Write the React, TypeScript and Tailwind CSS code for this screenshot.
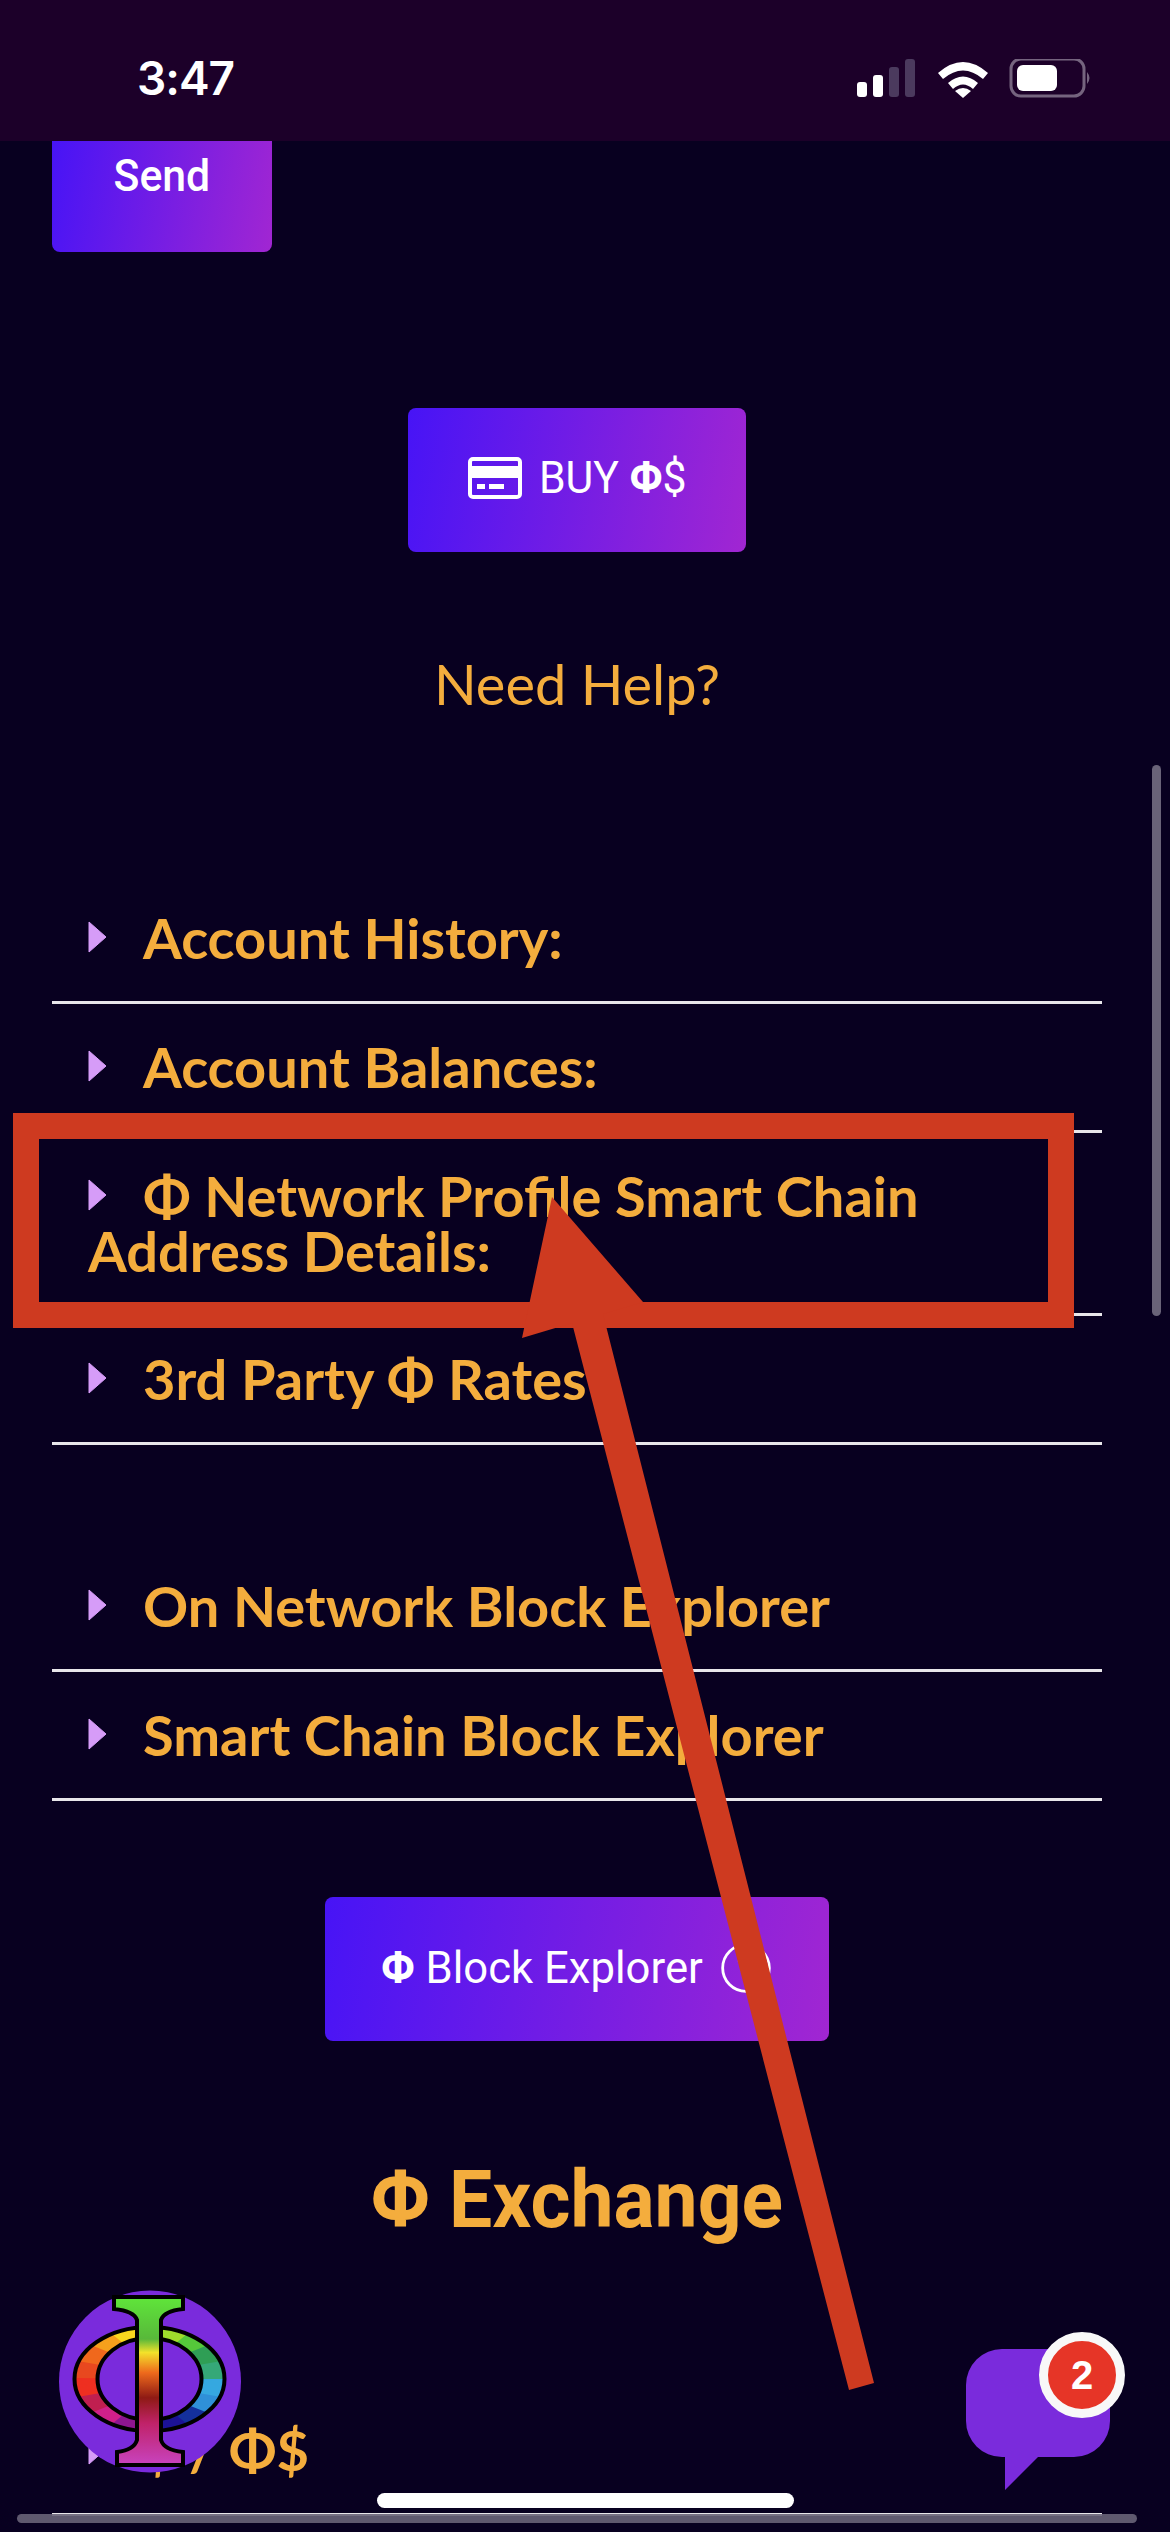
import { CircleHelp } from 'lucide-react';

const BUTTON_FONT = "font-['Roboto',sans-serif]";
const BUTTON_BG = 'bg-[linear-gradient(100deg,#4714f6,#a126d2)]';

function StatusIcons() {
  return (
    <svg width="240" height="42" viewBox="0 0 240 42" className="block">
      {/* signal */}
      <rect x="0" y="23" width="10" height="15" rx="3" fill="#fff" />
      <rect x="16" y="16" width="10" height="22" rx="3" fill="#fff" />
      <rect x="32" y="8" width="10" height="30" rx="3" fill="#4b3a5e" />
      <rect x="48" y="0" width="10" height="38" rx="3" fill="#4b3a5e" />
      {/* wifi */}
      <path d="M81 14 Q106 -8 131 14 L126 20 Q106 3 86 20 Z" fill="#fff" />
      <path d="M91 24 Q106 11 121 24 L116 30 Q106 21 96 30 Z" fill="#fff" />
      <path d="M98 32 Q106 26 114 32 L106 39 Z" fill="#fff" />
      {/* battery */}
      <rect x="154" y="0" width="73" height="37" rx="10" fill="none" stroke="#75647f" strokeWidth="3" />
      <rect x="160" y="6" width="40" height="26" rx="6" fill="#fff" />
      <path d="M230 13 Q235 19 230 25 Z" fill="#75647f" />
    </svg>
  );
}

function CardIcon() {
  return (
    <svg width="54" height="42" viewBox="0 0 54 42" className="shrink-0">
      <rect x="2" y="2" width="50" height="38" rx="3" fill="none" stroke="#fff" strokeWidth="4" />
      <rect x="2" y="9" width="50" height="12" fill="#fff" />
      <rect x="9" y="27" width="8" height="5" fill="#fff" />
      <rect x="21" y="27" width="15" height="5" fill="#fff" />
    </svg>
  );
}

function Row({ children, tall }: { children: React.ReactNode; tall?: boolean }) {
  return (
    <div className={`border-b-[3px] border-[#e8e6ea] pl-[36px] pr-[60px] pt-[35px] ${tall ? 'h-[183px]' : 'h-[129px]'}`}>
      <div className="font-['Lato',sans-serif] text-[56px] leading-[55px] font-bold text-[#f4ad3d]">
        <svg width="18" height="32" viewBox="0 0 18 32" className="inline-block mr-[37px] align-[6px]">
          <path d="M1 1 L18 16 L1 31 Z" fill="#d69cf8" stroke="#d69cf8" strokeWidth="1" strokeLinejoin="round" />
        </svg>
        {children}
      </div>
    </div>
  );
}

// segments of the rainbow ring, clockwise from the left
const RING_COLORS = [
  '#e8481f', '#f0681c', '#f5a01c', '#f9d81e', '#e8ea2a', '#9fdc2c', '#55c83a', '#2f9e55',
  '#35a878', '#35a8e0', '#2f90d8', '#14309c', '#1c1296', '#5a1496', '#8d1690', '#d0208a', '#c01f50', '#ee2f20',
];

function ringSegment(index: number) {
  const cx = 90.5;
  const cy = 89;
  const step = (Math.PI * 2) / RING_COLORS.length;
  const a = Math.PI + index * step;
  const b = a + step + 0.02;
  const pt = (rx: number, ry: number, t: number) =>
    `${(cx + rx * Math.cos(t)).toFixed(1)} ${(cy + ry * Math.sin(t)).toFixed(1)}`;
  return `M${pt(75, 52, a)} A75 52 0 0 1 ${pt(75, 52, b)} L${pt(52, 41, b)} A52 41 0 0 0 ${pt(52, 41, a)} Z`;
}

function PhiLogo() {
  return (
    <svg width="182" height="183" viewBox="0 0 182 183" className="absolute left-[59px] top-[2290px]">
      <defs>
        <linearGradient id="stem" x1="0" y1="0" x2="0" y2="1">
          <stop offset="0" stopColor="#5fe63a" />
          <stop offset="0.25" stopColor="#58b83a" />
          <stop offset="0.33" stopColor="#f3e22a" />
          <stop offset="0.45" stopColor="#ee6a1c" />
          <stop offset="0.6" stopColor="#8e1a14" />
          <stop offset="0.75" stopColor="#c02268" />
          <stop offset="1" stopColor="#c844c0" />
        </linearGradient>
      </defs>
      <circle cx="91" cy="91.5" r="91" fill="#7a2bdc" />
      {RING_COLORS.map((color, i) => (
        <path key={color + i} d={ringSegment(i)} fill={color} />
      ))}
      <ellipse cx="90.5" cy="89" rx="75" ry="52" fill="none" stroke="#000" strokeWidth="4" />
      <ellipse cx="90.5" cy="89" rx="52" ry="41" fill="none" stroke="#000" strokeWidth="4" />
      <path
        d="M55 7 H124 V19 Q105 21 102 30 V150 Q105 160 124 162 V175 H58 V162 Q75 160 78 150 V30 Q75 21 55 19 Z"
        fill="url(#stem)"
        stroke="#000"
        strokeWidth="4"
      />
    </svg>
  );
}

function ChatBubble() {
  return (
    <div className="absolute left-[966px] top-[2332px] w-[160px] h-[160px]">
      <svg width="144" height="141" viewBox="0 0 144 141" className="absolute left-0 top-[17px]">
        <path
          d="M36 0 H108 A36 36 0 0 1 144 36 V72 A36 36 0 0 1 108 108 H72 L39 141 V108 H36 A36 36 0 0 1 0 72 V36 A36 36 0 0 1 36 0 Z"
          fill="#7a2bdc"
        />
      </svg>
      <div className="absolute left-[73px] top-0 flex h-[86px] w-[86px] items-center justify-center rounded-full border-[9px] border-[#f8f8f8] bg-[#e63527] font-['Liberation_Sans',sans-serif] text-[40px] leading-none font-bold text-white">
        2
      </div>
    </div>
  );
}

export default function App() {
  return (
    <div className="relative flex h-[2532px] w-[1170px] flex-col overflow-hidden bg-[#080020]">
      {/* Status bar */}
      <div className="flex h-[141px] shrink-0 items-start justify-between bg-[#1c0029] pl-[137px] pr-[73px] pt-[48px]">
        <span className="font-['Inter',sans-serif] text-[46px] leading-[60px] font-semibold tracking-[-1px] text-white">3:47</span>
        <div className="pt-[11px]">
          <StatusIcons />
        </div>
      </div>

      <div className="flex flex-col pl-[52px] pr-[68px]">
        <div
          className={`flex h-[111px] w-[220px] justify-center rounded-b-lg pt-[10px] text-[45px] leading-[50px] font-medium text-white ${BUTTON_FONT} ${BUTTON_BG}`}
        >
          <span className="inline-block scale-x-[0.95]">Send</span>
        </div>

        <div
          className={`mx-auto mt-[156px] flex h-[144px] w-[338px] items-center justify-center gap-[17px] rounded-lg pb-[5px] text-[45px] leading-none text-white ${BUTTON_FONT} ${BUTTON_BG}`}
        >
          <CardIcon />
          <span className="-mx-[4px] inline-block scale-x-[0.95]">
            BUY <span className="font-bold">Φ</span>$
          </span>
        </div>

        <div className="mt-[102px] text-center font-['Lato',sans-serif] text-[56px] leading-[60px] text-[#f4ad3d]">Need Help?</div>

        <div className="mt-[161px]">
          <Row>Account History:</Row>
          <Row>Account Balances:</Row>
          <Row tall>Φ Network Profile Smart Chain Address Details:</Row>
          <Row>3rd Party Φ Rates</Row>
        </div>

        <div className="mt-[98px]">
          <Row>On Network Block Explorer</Row>
          <Row>Smart Chain Block Explorer</Row>
        </div>

        <div
          className={`mx-auto mt-[96px] flex h-[144px] w-[504px] items-center justify-center gap-[14px] rounded-lg pb-[3px] text-[45px] leading-none text-white ${BUTTON_FONT} ${BUTTON_BG}`}
        >
          <span className="-mx-[4px] inline-block scale-x-[0.97]">
            <span className="font-bold">Φ</span> Block Explorer
          </span>
          <CircleHelp size={56} strokeWidth={1.2} />
        </div>

        <div className={`mt-[119px] flex justify-center text-[80px] leading-[80px] font-bold text-[#f4ad3d] ${BUTTON_FONT}`}>
          <span className="inline-block scale-x-[0.96]">Φ Exchange</span>
        </div>

        <div className="mt-[147px]">
          <Row>$ / Φ$</Row>
        </div>
      </div>

      {/* Annotation drawn over the screenshot */}
      <div className="absolute left-[13px] top-[1113px] h-[215px] w-[1061px] border-[26px] border-[#ce3a20]" />
      <svg width="1170" height="2532" viewBox="0 0 1170 2532" className="absolute left-0 top-0">
        <path d="M552 1197 L643 1302 L603 1314 L874 2383 L849 2390 L572 1323 L522 1338 Z" fill="#ce3a20" />
      </svg>

      <PhiLogo />
      <ChatBubble />

      {/* Scroll bars and home indicator */}
      <div className="absolute left-[1152px] top-[765px] h-[551px] w-[9px] rounded-full bg-[#696378]" />
      <div className="absolute left-[17px] top-[2514px] h-[9px] w-[1120px] rounded-full bg-[#696378]/90" />
      <div className="absolute left-[377px] top-[2493px] h-[15px] w-[417px] rounded-full bg-white" />
    </div>
  );
}
